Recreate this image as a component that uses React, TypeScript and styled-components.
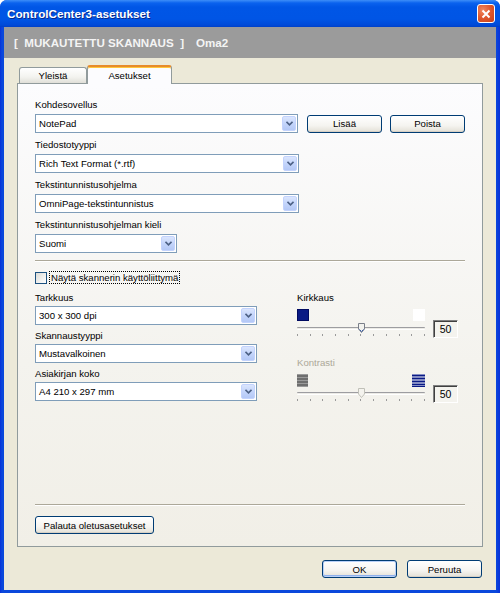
import styled, { createGlobalStyle } from "styled-components";

const GlobalStyle = createGlobalStyle`
  html, body {
    margin: 0;
    padding: 0;
    background: #ffffff;
  }
  body {
    font-family: "Liberation Sans", Arial, sans-serif;
  }
`;

const Window = styled.div`
  width: 500px;
  height: 593px;
  box-sizing: border-box;
  display: flex;
  flex-direction: column;
  background: linear-gradient(90deg, #0831d9 0, #0a48dc 2px, #0a48dc 496px, #0831d9 500px);
  border-radius: 7px 7px 0 0;
  overflow: hidden;
`;

const TitleBar = styled.div`
  height: 27px;
  flex-shrink: 0;
  display: flex;
  align-items: center;
  padding: 0 5px 0 7px;
  background: linear-gradient(
    #3d8ef8 0,
    #0a62ee 3px,
    #0056e6 7px,
    #0055e5 19px,
    #004ad8 25px,
    #0040c8 27px
  );
`;

const Title = styled.span`
  flex: 1;
  color: #ffffff;
  font-weight: bold;
  font-size: 11.7px;
  text-shadow: 1px 1px 0 #0a2a8a;
`;

const CloseButton = styled.div`
  width: 18px;
  height: 19px;
  box-sizing: border-box;
  border: 1px solid #ffffff;
  border-radius: 3px;
  background: radial-gradient(circle at 30% 30%, #f08860 0, #e05a30 45%, #c8401a 100%);
  display: flex;
  align-items: center;
  justify-content: center;
`;

const Client = styled.div`
  flex: 1;
  margin: 0 4px 3px;
  background: #ece9d8;
  display: flex;
  flex-direction: column;
`;

const HeaderBand = styled.div`
  height: 31px;
  flex-shrink: 0;
  background: #9b9b9b;
  display: flex;
  align-items: center;
  padding-left: 10px;
  color: #f4f4f4;
  font-weight: bold;
  font-size: 11.6px;
  white-space: pre;
`;

const HeaderName = styled.span`
  margin-left: 12px;
`;

const TabRow = styled.div`
  height: 25px;
  flex-shrink: 0;
  display: flex;
  align-items: flex-end;
  padding-left: 15px;
`;

const Tab = styled.div<{ $active?: boolean; $w: number }>`
  width: ${({ $w }) => $w}px;
  box-sizing: border-box;
  height: ${({ $active }) => ($active ? 19 : 16)}px;
  margin-bottom: ${({ $active }) => ($active ? -1 : 0)}px;
  position: relative;
  z-index: ${({ $active }) => ($active ? 1 : 0)};
  border: 1px solid #919b9c;
  border-bottom: none;
  border-top: ${({ $active }) => ($active ? "2px solid #e68b2c" : "1px solid #919b9c")};
  border-radius: 3px 3px 0 0;
  background: ${({ $active }) =>
    $active ? "#fcfcfe" : "linear-gradient(#ffffff, #f3f3ef 60%, #e0dfd8)"};
  box-shadow: ${({ $active }) => ($active ? "inset 0 1px 0 #ffc73c" : "none")};
  font-size: 9.6px;
  color: #000;
  display: flex;
  justify-content: center;
  padding-top: ${({ $active }) => ($active ? 3 : 2)}px;
`;

const Panel = styled.div`
  height: 464px;
  flex-shrink: 0;
  box-sizing: border-box;
  margin: 0 13px;
  border: 1px solid #919b9c;
  background: linear-gradient(#fcfcfe, #f4f3ee 60%, #f1efe7);
  display: flex;
  flex-direction: column;
  padding: 14px 17px 12px;
  font-size: 9.6px;
  color: #000;
`;

const FieldList = styled.div<{ $gap: number }>`
  display: flex;
  flex-direction: column;
  gap: ${({ $gap }) => $gap}px;
`;

const Field = styled.div<{ $space: number }>`
  display: flex;
  flex-direction: column;
  gap: ${({ $space }) => $space}px;
`;

const Label = styled.div<{ $disabled?: boolean }>`
  height: 13px;
  line-height: 13px;
  color: ${({ $disabled }) => ($disabled ? "#aca899" : "#000")};
  white-space: nowrap;
`;

const ComboRow = styled.div`
  display: flex;
  align-items: center;
`;

const Combo = styled.div<{ $w: number }>`
  width: ${({ $w }) => $w}px;
  height: 19px;
  box-sizing: border-box;
  border: 1px solid #7f9db9;
  background: #ffffff;
  display: flex;
  align-items: center;
  padding-left: 3px;
`;

const ComboText = styled.span`
  flex: 1;
  white-space: nowrap;
`;

const ComboArrow = styled.span`
  width: 14px;
  height: 15px;
  margin-right: 1px;
  box-sizing: border-box;
  border: 1px solid #c3d3fd;
  border-radius: 2px;
  background: linear-gradient(#dbe5fd, #c4d5fb 50%, #b4c8f6);
  display: flex;
  align-items: center;
  justify-content: center;
`;

const Button = styled.div<{ $w: number; $default?: boolean }>`
  width: ${({ $w }) => $w}px;
  height: 18px;
  box-sizing: border-box;
  border: 1px solid #003c74;
  border-radius: 3px;
  background: linear-gradient(#ffffff, #f5f4f0 60%, #e3e0d6);
  box-shadow: ${({ $default }) =>
    $default ? "inset 0 0 0 1px #b8d0f8, inset 0 -1px 0 1px #8eb0ec" : "inset 0 -1px 0 #d6d0c5"};
  display: flex;
  align-items: center;
  justify-content: center;
  font-size: 9.6px;
  color: #000;
`;

const TopButtons = styled.div`
  display: flex;
  gap: 8px;
  margin-left: 9px;
`;

const Separator = styled.div<{ $top: number; $bottom?: number }>`
  height: 1px;
  margin-top: ${({ $top }) => $top}px;
  margin-bottom: ${({ $bottom }) => $bottom ?? 0}px;
  background: #aca899;
  border-bottom: 1px solid #ffffff;
`;

const CheckRow = styled.div`
  margin-top: 9px;
  height: 13px;
  display: flex;
  align-items: center;
`;

const CheckBox = styled.span`
  width: 12px;
  height: 12px;
  box-sizing: border-box;
  border: 1px solid #1c5180;
  background: linear-gradient(135deg, #dcdcd7, #ffffff);
`;

const CheckLabel = styled.span`
  margin-left: 2px;
  padding: 0 1px;
  line-height: 11px;
  border: 1px dotted #000;
  white-space: nowrap;
`;

const LowerGrid = styled.div`
  margin-top: 7px;
  display: grid;
  grid-template-columns: 222px 161px;
  column-gap: 40px;
  align-items: start;
`;

const SliderColumn = styled.div`
  display: flex;
  flex-direction: column;
  gap: 18px;
`;

const SliderGroup = styled.div`
  display: flex;
  flex-direction: column;
`;

const SliderRow = styled.div`
  display: flex;
  align-items: flex-end;
  gap: 8px;
`;

const SliderBody = styled.div`
  width: 128px;
  display: flex;
  flex-direction: column;
  margin-top: 5px;
`;

const IconRow = styled.div`
  height: 13px;
  display: flex;
  justify-content: space-between;
  align-items: flex-start;
`;

const TrackWrap = styled.div`
  height: 12px;
  position: relative;
  display: flex;
  align-items: center;
`;

const Track = styled.div`
  width: 100%;
  height: 3px;
  box-sizing: border-box;
  border-top: 1px solid #9d9da1;
  border-bottom: 1px solid #ffffff;
  background: #ecebe6;
  border-radius: 1px;
`;

const Thumb = styled.svg`
  position: absolute;
  top: 1px;
`;

const Ticks = styled.div`
  height: 4px;
  display: flex;
  justify-content: space-between;
  align-items: flex-start;
`;

const Tick = styled.span`
  width: 1px;
  height: 2px;
  background: #9a9a9a;
`;

const ValueBox = styled.div`
  width: 25px;
  height: 18px;
  box-sizing: border-box;
  border: 1px solid;
  border-color: #808080 #ffffff #ffffff #808080;
  box-shadow: inset 1px 1px 0 #404040;
  background: #f4f3ee;
  display: flex;
  align-items: center;
  justify-content: center;
  font-size: 10.5px;
  color: #000;
`;

const BottomArea = styled.div`
  margin-top: auto;
  display: flex;
  flex-direction: column;
`;

const Footer = styled.div`
  display: flex;
  justify-content: flex-end;
  gap: 10px;
  padding: 13px 14px 0 0;
`;

const Chevron = () => (
  <svg width="7" height="5" viewBox="0 0 7 5">
    <path d="M0.5 0.8 L3.5 3.8 L6.5 0.8" fill="none" stroke="#4d6185" strokeWidth="1.6" />
  </svg>
);

const ComboBox = ({ w, text }: { w: number; text: string }) => (
  <Combo $w={w}>
    <ComboText>{text}</ComboText>
    <ComboArrow>
      <Chevron />
    </ComboArrow>
  </Combo>
);

const SolidSquare = ({ color, border }: { color: string; border: string }) => (
  <svg width="12" height="12" viewBox="0 0 12 12">
    <rect x="0.5" y="0.5" width="11" height="11" fill={color} stroke={border} />
  </svg>
);

const GrayStripes = () => (
  <svg width="11" height="13" viewBox="0 0 11 13">
    <rect x="0" y="0" width="11" height="13" fill="#9a9a9a" />
    {[1, 4, 7, 10].map((y) => (
      <rect key={y} x="0" y={y} width="11" height="2" fill="#6e6e6e" />
    ))}
  </svg>
);

const BlueStripes = () => (
  <svg width="13" height="13" viewBox="0 0 13 13">
    <rect x="0" y="0" width="13" height="13" fill="#ffffff" />
    {[0, 3, 6, 9].map((y) => (
      <rect key={y} x="0" y={y + 0.5} width="13" height="2" fill="#0a1a85" />
    ))}
    <rect x="0" y="12" width="13" height="1" fill="#0a1a85" />
  </svg>
);

const Slider = ({
  label,
  value,
  disabled,
  left,
  right,
}: {
  label: string;
  value: number;
  disabled?: boolean;
  left: React.ReactNode;
  right: React.ReactNode;
}) => (
  <SliderGroup>
    <Label $disabled={disabled}>{label}</Label>
    <SliderRow>
      <SliderBody>
        <IconRow>
          {left}
          {right}
        </IconRow>
        <TrackWrap>
          <Track />
          <Thumb
            width="7"
            height="10"
            viewBox="0 0 7 10"
            style={{ left: `calc(${value}% - 3px)` }}
          >
            <path
              d="M0.5 0.5 H6.5 V6 L3.5 9.5 L0.5 6 Z"
              fill={disabled ? "#f4f3ee" : "#f2f2ee"}
              stroke={disabled ? "#c0c0b8" : "#7a7f8a"}
            />
            {!disabled && <path d="M1.5 6.5 L3.5 8.5 L5.5 6.5" fill="none" stroke="#3a5ea8" />}
          </Thumb>
        </TrackWrap>
        <Ticks>
          {Array.from({ length: 11 }).map((_, i) => (
            <Tick key={i} />
          ))}
        </Ticks>
      </SliderBody>
      <ValueBox>{value}</ValueBox>
    </SliderRow>
  </SliderGroup>
);

export default function App() {
  return (
    <>
      <GlobalStyle />
      <Window>
        <TitleBar>
          <Title>ControlCenter3-asetukset</Title>
          <CloseButton>
            <svg width="10" height="10" viewBox="0 0 10 10">
              <path d="M1.5 1.5 L8.5 8.5 M8.5 1.5 L1.5 8.5" stroke="#ffffff" strokeWidth="2" />
            </svg>
          </CloseButton>
        </TitleBar>
        <Client>
          <HeaderBand>
            [  MUKAUTETTU SKANNAUS  ]<HeaderName>Oma2</HeaderName>
          </HeaderBand>
          <TabRow>
            <Tab $w={68}>Yleistä</Tab>
            <Tab $w={85} $active>
              Asetukset
            </Tab>
          </TabRow>
          <Panel>
            <FieldList $gap={5}>
              <Field $space={3}>
                <Label>Kohdesovellus</Label>
                <ComboRow>
                  <ComboBox w={264} text="NotePad" />
                  <TopButtons>
                    <Button $w={75}>Lisää</Button>
                    <Button $w={75}>Poista</Button>
                  </TopButtons>
                </ComboRow>
              </Field>
              <Field $space={3}>
                <Label>Tiedostotyyppi</Label>
                <ComboBox w={264} text="Rich Text Format (*.rtf)" />
              </Field>
              <Field $space={3}>
                <Label>Tekstintunnistusohjelma</Label>
                <ComboBox w={264} text="OmniPage-tekstintunnistus" />
              </Field>
              <Field $space={3}>
                <Label>Tekstintunnistusohjelman kieli</Label>
                <ComboBox w={142} text="Suomi" />
              </Field>
            </FieldList>

            <Separator $top={7} />

            <CheckRow>
              <CheckBox />
              <CheckLabel>Näytä skannerin käyttöliittymä</CheckLabel>
            </CheckRow>

            <LowerGrid>
              <FieldList $gap={4}>
                <Field $space={2}>
                  <Label>Tarkkuus</Label>
                  <ComboBox w={222} text="300 x 300 dpi" />
                </Field>
                <Field $space={2}>
                  <Label>Skannaustyyppi</Label>
                  <ComboBox w={222} text="Mustavalkoinen" />
                </Field>
                <Field $space={2}>
                  <Label>Asiakirjan koko</Label>
                  <ComboBox w={222} text="A4 210 x 297 mm" />
                </Field>
              </FieldList>

              <SliderColumn>
                <Slider
                  label="Kirkkaus"
                  value={50}
                  left={<SolidSquare color="#0a1a85" border="#000a60" />}
                  right={<SolidSquare color="#ffffff" border="#ffffff" />}
                />
                <Slider
                  label="Kontrasti"
                  value={50}
                  disabled
                  left={<GrayStripes />}
                  right={<BlueStripes />}
                />
              </SliderColumn>
            </LowerGrid>

            <BottomArea>
              <Separator $top={0} $bottom={10} />
              <Button $w={119}>Palauta oletusasetukset</Button>
            </BottomArea>
          </Panel>
          <Footer>
            <Button $w={75} $default>
              OK
            </Button>
            <Button $w={75}>Peruuta</Button>
          </Footer>
        </Client>
      </Window>
    </>
  );
}
